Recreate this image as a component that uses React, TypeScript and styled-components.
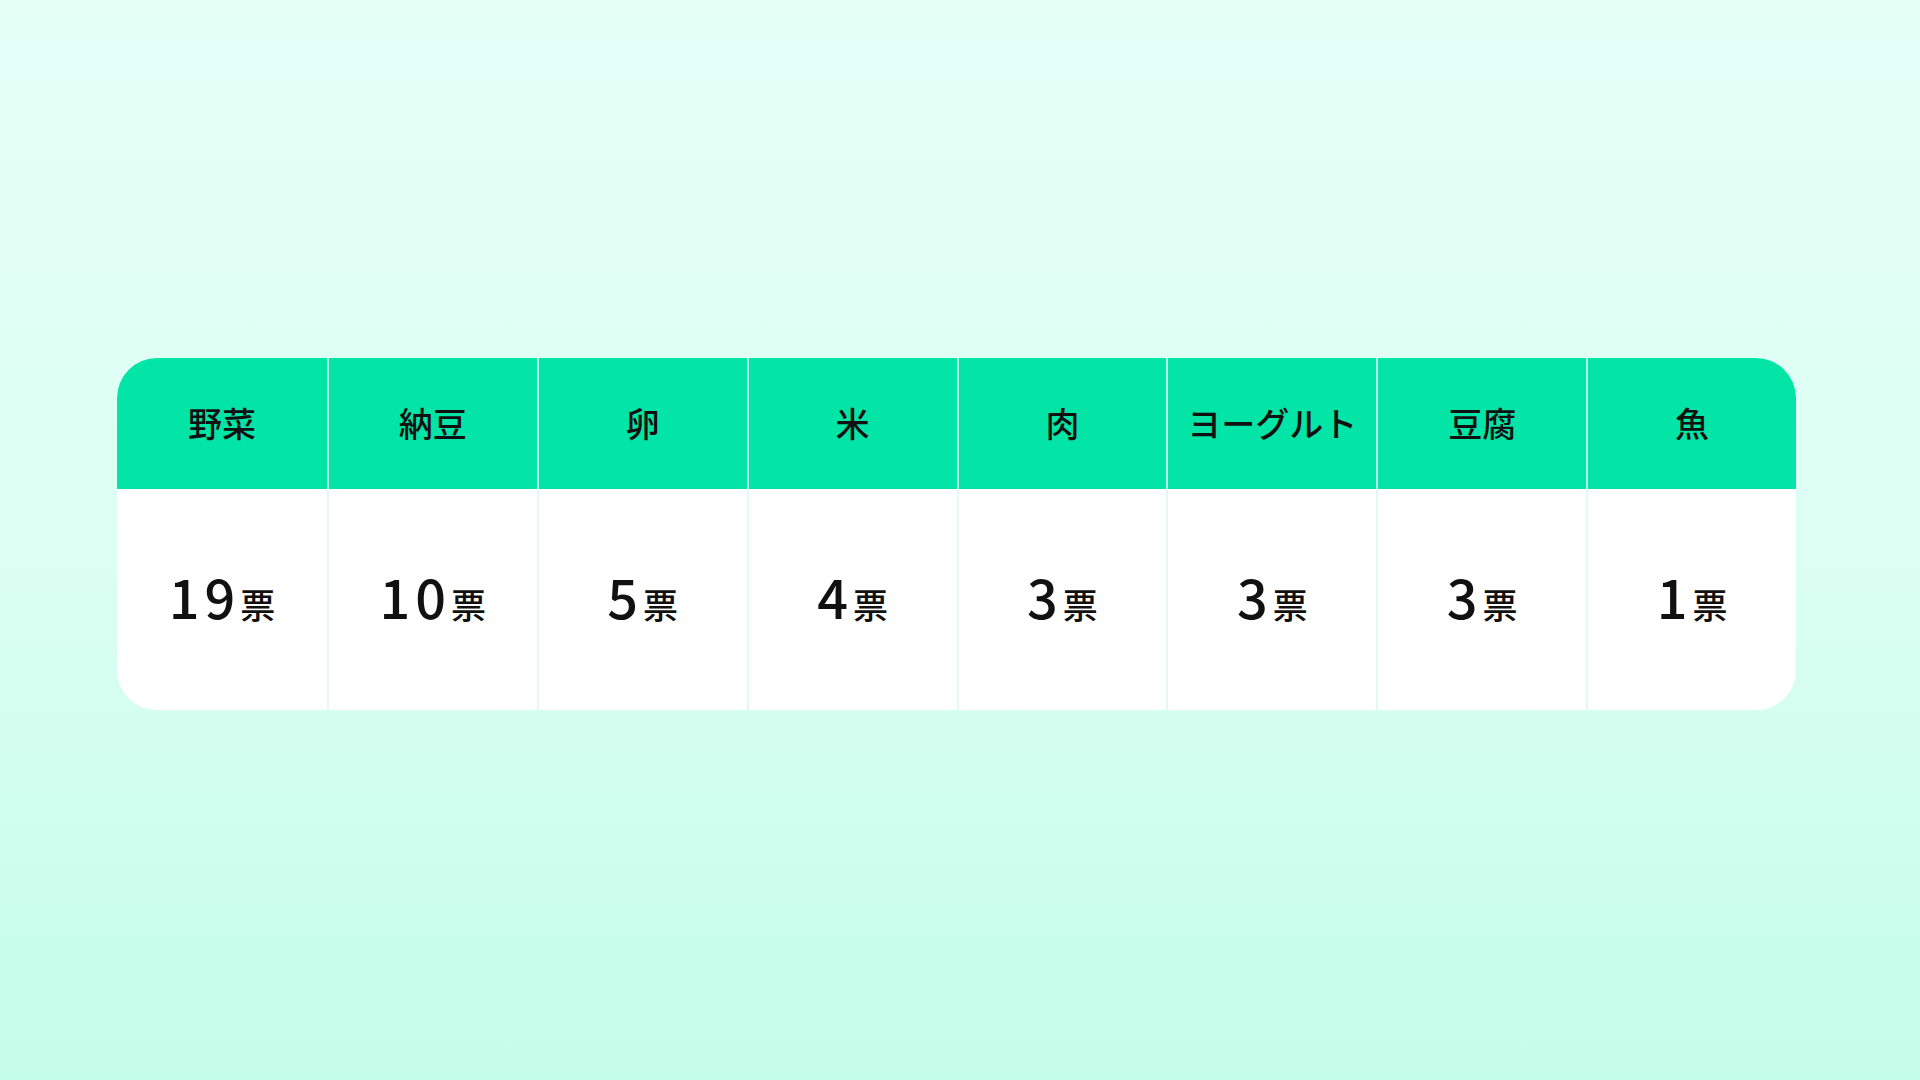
import React from "react";
import styled, { createGlobalStyle } from "styled-components";

const GlobalStyle = createGlobalStyle`
  html, body {
    margin: 0;
    padding: 0;
  }
  body {
    font-family: "Noto Sans CJK JP", "Noto Sans", sans-serif;
  }
`;

const Page = styled.div`
  width: 1920px;
  height: 1080px;
  box-sizing: border-box;
  padding: 358px 0 0 117px;
  background: linear-gradient(180deg, #e5fff7 0%, #dcfff3 50%, #c4fdea 100%);
`;

const Table = styled.div`
  width: 1679px;
  border-radius: 40px;
  overflow: hidden;
  background: #ffffff;
`;

const Row = styled.div<{ $head?: boolean }>`
  display: grid;
  grid-template-columns: repeat(8, 1fr);
  background: ${(p) => (p.$head ? "#02e5a6" : "#ffffff")};
`;

const HeadCell = styled.div<{ $first?: boolean }>`
  height: 131px;
  display: flex;
  align-items: center;
  justify-content: center;
  border-left: ${(p) => (p.$first ? "none" : "2px solid #b5f3e2")};
  font-family: "Noto Sans CJK JP", sans-serif;
  font-size: 34px;
  font-weight: 500;
  color: #111111;
  padding-bottom: 2px;
  box-sizing: border-box;
`;

const BodyCell = styled.div<{ $first?: boolean }>`
  height: 221px;
  display: flex;
  align-items: baseline;
  justify-content: center;
  padding-top: 80px;
  box-sizing: border-box;
  border-left: ${(p) => (p.$first ? "none" : "2px solid #e6f8f6")};
  color: #111111;
`;

const Num = styled.span`
  font-family: "Noto Sans CJK JP", sans-serif;
  font-size: 54px;
  font-weight: 500;
  letter-spacing: 5px;
  line-height: 1;
`;

const Unit = styled.span`
  font-family: "Noto Sans CJK JP", sans-serif;
  font-size: 35px;
  font-weight: 500;
  line-height: 1;
`;

const data = [
  { name: "野菜", votes: 19 },
  { name: "納豆", votes: 10 },
  { name: "卵", votes: 5 },
  { name: "米", votes: 4 },
  { name: "肉", votes: 3 },
  { name: "ヨーグルト", votes: 3 },
  { name: "豆腐", votes: 3 },
  { name: "魚", votes: 1 },
];

export default function App() {
  return (
    <>
      <GlobalStyle />
      <Page>
        <Table>
          <Row $head>
            {data.map((d, i) => (
              <HeadCell key={d.name} $first={i === 0}>
                {d.name}
              </HeadCell>
            ))}
          </Row>
          <Row>
            {data.map((d, i) => (
              <BodyCell key={d.name} $first={i === 0}>
                <Num>{d.votes}</Num>
                <Unit>票</Unit>
              </BodyCell>
            ))}
          </Row>
        </Table>
      </Page>
    </>
  );
}
